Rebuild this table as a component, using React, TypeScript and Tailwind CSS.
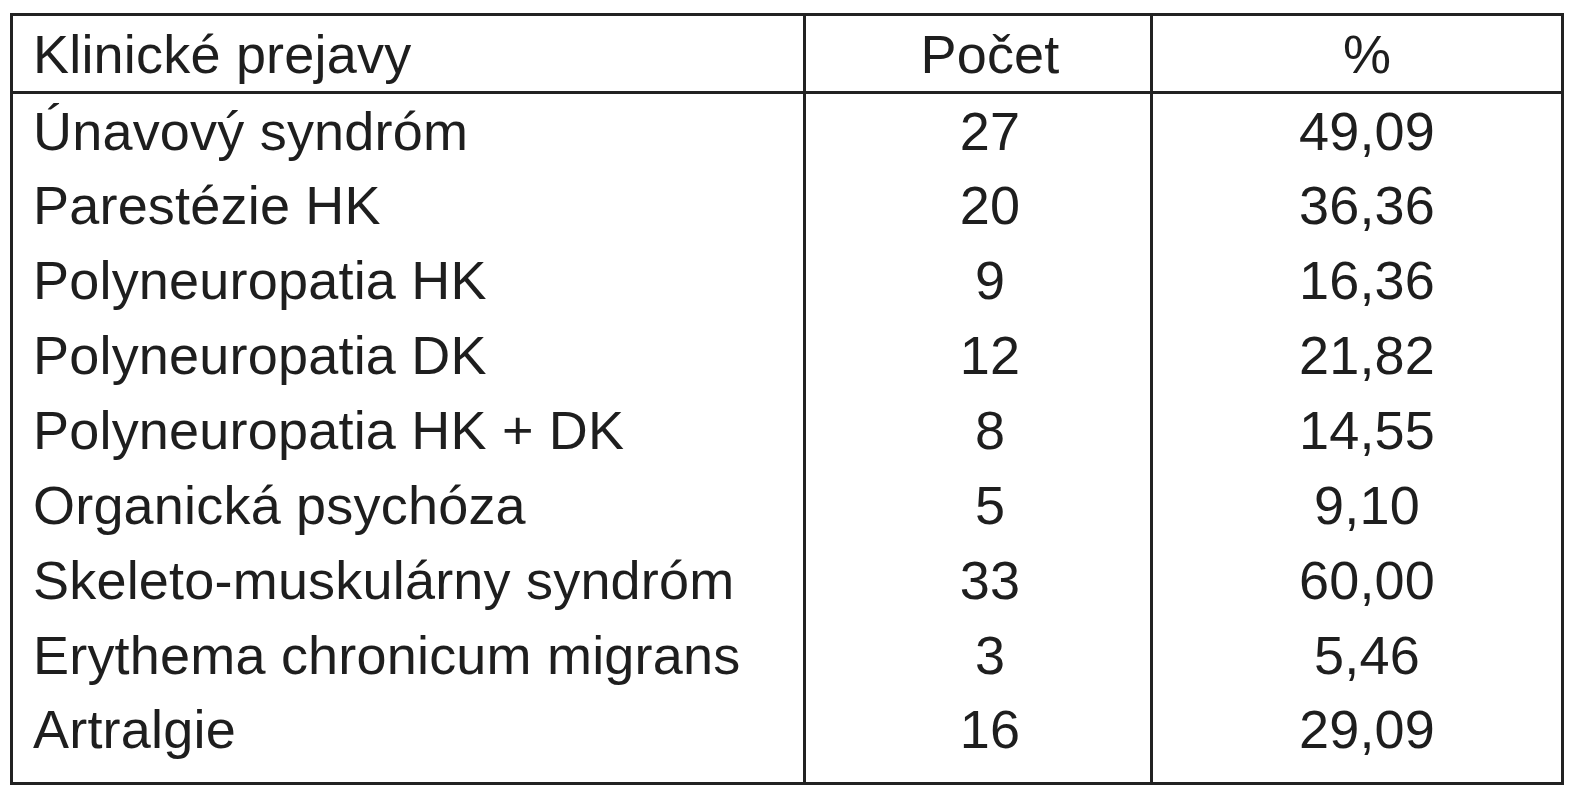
const rows: Array<[string, string, string]> = [
  ["Únavový syndróm", "27", "49,09"],
  ["Parestézie HK", "20", "36,36"],
  ["Polyneuropatia HK", "9", "16,36"],
  ["Polyneuropatia DK", "12", "21,82"],
  ["Polyneuropatia HK + DK", "8", "14,55"],
  ["Organická psychóza", "5", "9,10"],
  ["Skeleto-muskulárny syndróm", "33", "60,00"],
  ["Erythema chronicum migrans", "3", "5,46"],
  ["Artralgie", "16", "29,09"],
];

export default function App() {
  return (
    <div
      className="h-[800px] w-[1576px] bg-white pl-[10px] pt-[13px] text-[#1e1e1e]"
      style={{ fontFamily: '"Liberation Sans", Arial, sans-serif' }}
    >
      <table className="w-[1554px] border-collapse border-[3px] border-[#222] text-[54px] leading-none tracking-[0.2px]">
        <colgroup>
          <col className="w-[793px]" />
          <col className="w-[347px]" />
          <col />
        </colgroup>
        <thead>
          <tr className="h-[78px] border-b-[3px] border-[#222]">
            <th className="border-r-[3px] border-[#222] pl-[20px] text-left font-normal">Klinické prejavy</th>
            <th className="border-r-[3px] border-[#222] pl-[24px] text-center font-normal">Počet</th>
            <th className="pl-[20px] text-center font-normal">%</th>
          </tr>
        </thead>
        <tbody>
          {rows.map(([name, count, pct], i) => {
            const last = i === rows.length - 1;
            const pad = last ? "pb-[16px]" : "";
            return (
              <tr key={name} className={last ? "h-[91px]" : "h-[75px]"}>
                <td className={`border-r-[3px] border-[#222] pl-[20px] text-left ${pad}`}>{name}</td>
                <td className={`border-r-[3px] border-[#222] pl-[24px] text-center ${pad}`}>{count}</td>
                <td className={`pl-[20px] text-center ${pad}`}>{pct}</td>
              </tr>
            );
          })}
        </tbody>
      </table>
    </div>
  );
}
